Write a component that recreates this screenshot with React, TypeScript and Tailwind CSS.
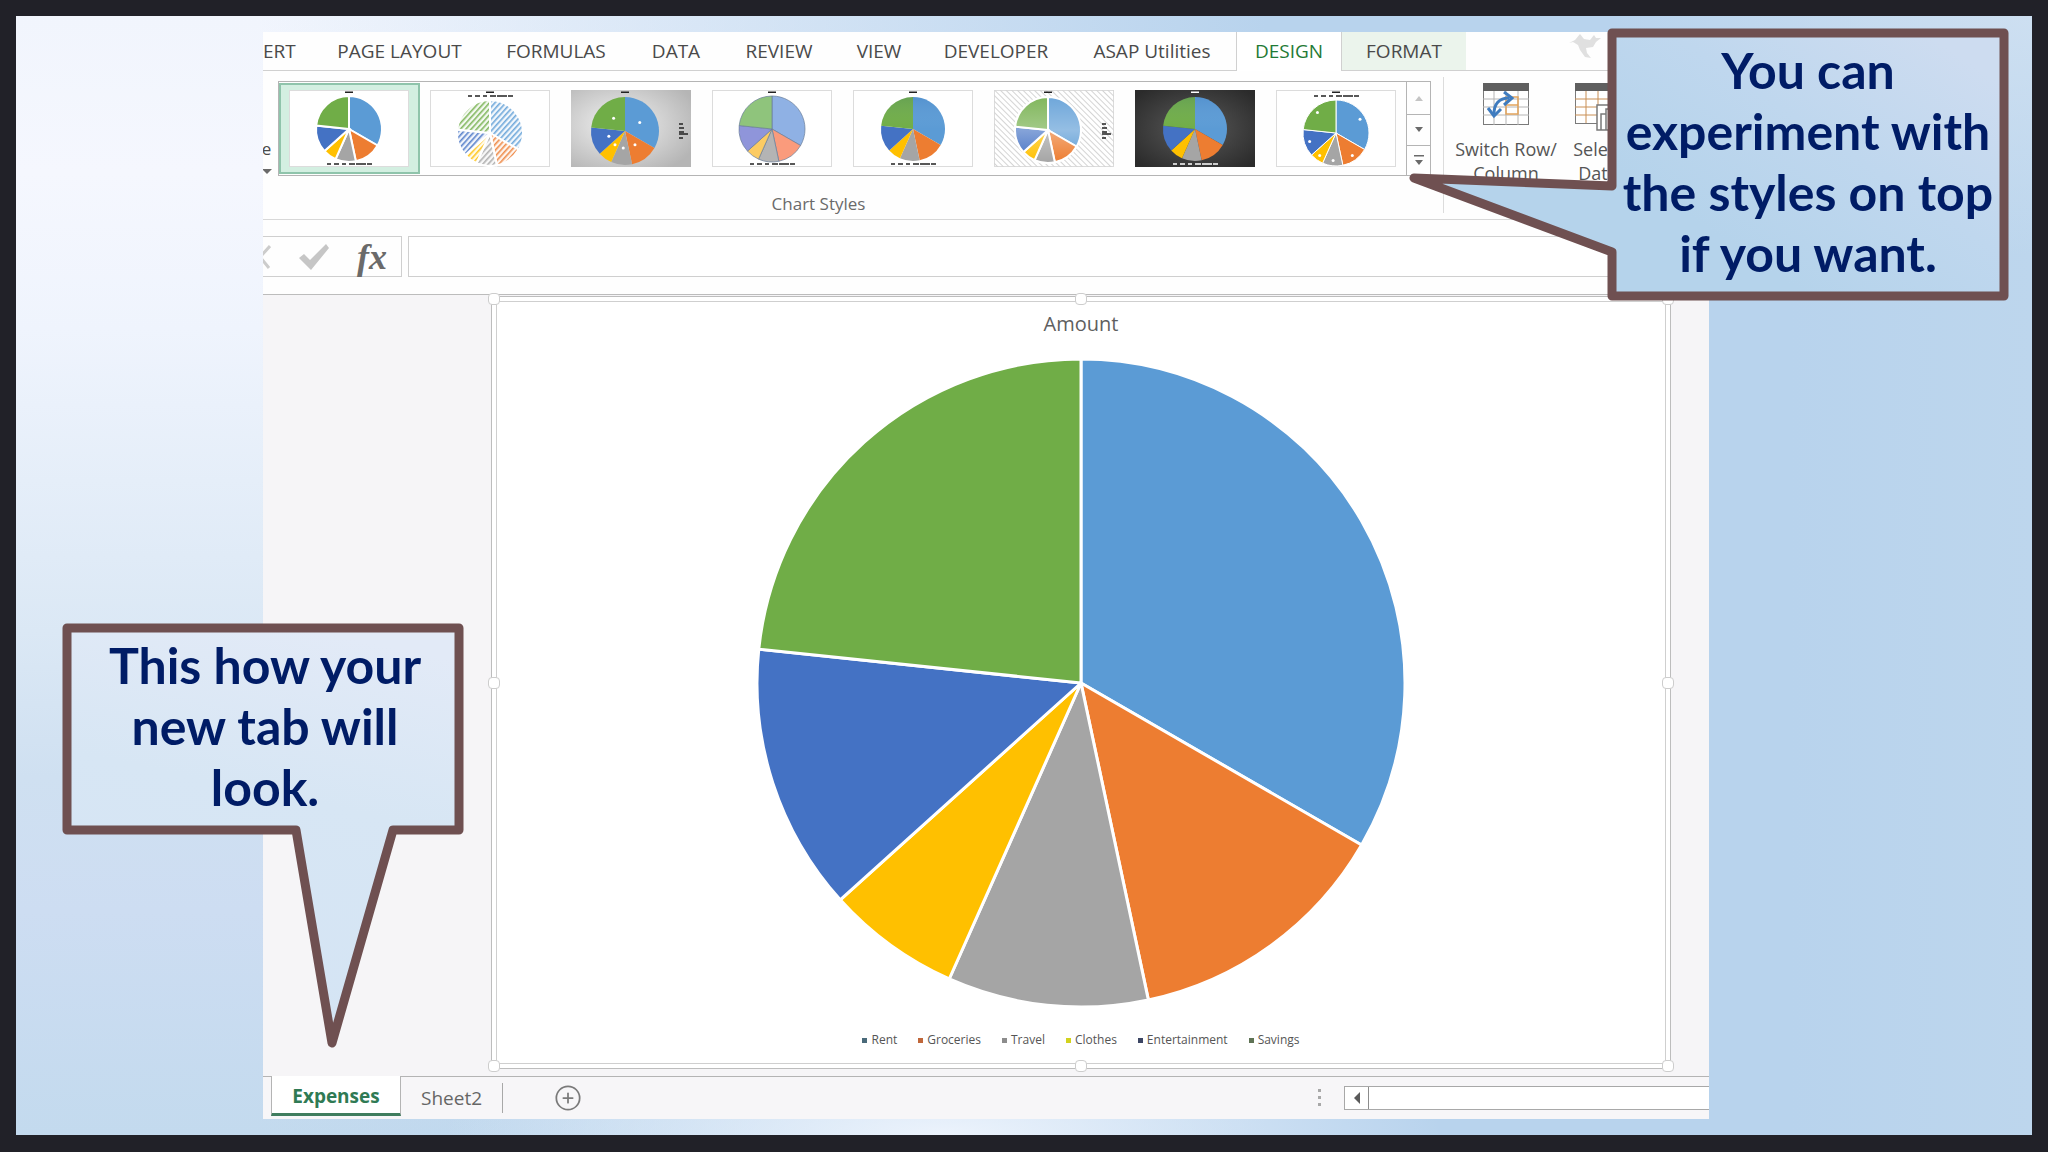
import { CirclePlus } from "lucide-react";

const FONT = "font-['Open_Sans','Noto_Sans',sans-serif]";

const expenses = [
  { name: "Rent", share: 10, color: "#5b9bd5", soft: "#8fb1e4", marker: "bg-[#4a6a7a]" },
  { name: "Groceries", share: 4, color: "#ed7d31", soft: "#fa9b7c", marker: "bg-[#c0673a]" },
  { name: "Travel", share: 3, color: "#a5a5a5", soft: "#b4b4b4", marker: "bg-[#8c8c8c]" },
  { name: "Clothes", share: 2, color: "#ffc000", soft: "#fccb62", marker: "bg-[#d2d21e]" },
  { name: "Entertainment", share: 4, color: "#4472c4", soft: "#8f95da", marker: "bg-[#3c4664]" },
  { name: "Savings", share: 7, color: "#70ad47", soft: "#8fc47c", marker: "bg-[#5f7355]" },
];

const total = expenses.reduce((sum, item) => sum + item.share, 0);

// Start and end angle of each slice, clockwise from twelve o'clock
const slices = expenses.map((item, i) => {
  const before = expenses.slice(0, i).reduce((sum, e) => sum + e.share, 0);
  const start = (before / total) * Math.PI * 2;
  const end = ((before + item.share) / total) * Math.PI * 2;
  return { ...item, start, end, mid: (start + end) / 2 };
});

function slicePath(cx: number, cy: number, r: number, start: number, end: number) {
  const x1 = cx + r * Math.sin(start);
  const y1 = cy - r * Math.cos(start);
  const x2 = cx + r * Math.sin(end);
  const y2 = cy - r * Math.cos(end);
  const large = end - start > Math.PI ? 1 : 0;
  return `M${cx} ${cy}L${x1} ${y1}A${r} ${r} 0 ${large} 1 ${x2} ${y2}Z`;
}

type ThumbStyle = {
  id: string;
  cx: number;
  cy: number;
  r: number;
  back?: "gray" | "hatch" | "dark";
  fill?: "solid" | "hatch" | "soft";
  gap?: number;
  legend: "bottom" | "top" | "right";
  dots?: number;
  shade?: boolean;
};

const chartStyles: ThumbStyle[] = [
  { id: "style1", cx: 60, cy: 39, r: 33, gap: 2, legend: "bottom" },
  { id: "style2", cx: 60, cy: 43, r: 33, fill: "hatch", gap: 2, legend: "top" },
  { id: "style3", cx: 54, cy: 41, r: 34, back: "gray", legend: "right", dots: 0.5 },
  { id: "style4", cx: 60, cy: 39, r: 33, fill: "soft", legend: "bottom" },
  { id: "style5", cx: 60, cy: 39, r: 32, legend: "bottom", shade: true },
  { id: "style6", cx: 54, cy: 40, r: 33, back: "hatch", gap: 2, legend: "right", shade: true },
  { id: "style7", cx: 60, cy: 39, r: 32, back: "dark", legend: "bottom", shade: true },
  { id: "style8", cx: 60, cy: 43, r: 33, gap: 1, legend: "top", dots: 0.84 },
];

function ChartThumb({ id, cx, cy, r, back, fill = "solid", gap = 0, legend, dots, shade }: ThumbStyle) {
  const ink = back === "dark" ? "#ffffff" : "#222222";
  const legendY = legend === "top" ? 6 : 74;
  return (
    <svg viewBox="0 0 120 77" className="h-[77px] w-[120px]" aria-hidden="true">
      <defs>
        <radialGradient id={`${id}-gray`} cx="0.4" cy="0.45" r="0.7">
          <stop offset="0" stopColor="#f2f2f2" />
          <stop offset="1" stopColor="#b5b5b5" />
        </radialGradient>
        <radialGradient id={`${id}-dark`} cx="0.5" cy="0.5" r="0.65">
          <stop offset="0" stopColor="#5a5a5a" />
          <stop offset="1" stopColor="#2b2b2b" />
        </radialGradient>
        <linearGradient id={`${id}-shade`} x1="0" y1="0" x2="0" y2="1">
          <stop offset="0" stopColor={back === "hatch" ? "#ffffff" : "#1f4fa0"} stopOpacity="0.12" />
          <stop offset="0.5" stopColor="#ffffff" stopOpacity={back === "hatch" ? 0.35 : 0} />
          <stop offset="1" stopColor="#ffffff" stopOpacity="0" />
        </linearGradient>
        <pattern id={`${id}-hatch`} width="4" height="4" patternUnits="userSpaceOnUse" patternTransform="rotate(-45)">
          <rect width="4" height="1" fill="#d4d4d4" />
        </pattern>
        {slices.map((s) => (
          <pattern key={s.name} id={`${id}-${s.name}`} width="4" height="4" patternUnits="userSpaceOnUse" patternTransform="rotate(-48)">
            <rect width="4" height="4" fill={s.color} fillOpacity="0.08" />
            <rect width="4" height="1.6" fill={s.color} fillOpacity="0.85" />
          </pattern>
        ))}
      </defs>
      <rect x="0.5" y="0.5" width="119" height="76" fill="#ffffff" stroke="#dcdcdc" />
      {back === "gray" && <rect width="120" height="77" fill={`url(#${id}-gray)`} />}
      {back === "dark" && <rect width="120" height="77" fill={`url(#${id}-dark)`} />}
      {back === "hatch" && <rect width="120" height="77" fill={`url(#${id}-hatch)`} transform="translate(120 0) scale(-1 1)" />}
      {back === "hatch" && <circle cx={cx} cy={cy} r={r + 1} fill="#ffffff" />}
      {slices.map((s) => (
        <path
          key={s.name}
          d={slicePath(cx, cy, r, s.start, s.end)}
          fill={fill === "hatch" ? `url(#${id}-${s.name})` : fill === "soft" ? s.soft : s.color}
          stroke={fill === "soft" ? "#6b7f9a" : "#ffffff"}
          strokeWidth={fill === "soft" ? 1 : gap}
          strokeOpacity={fill === "soft" ? 0.7 : 1}
        />
      ))}
      {shade && <circle cx={cx} cy={cy} r={r} fill={`url(#${id}-shade)`} />}
      {dots !== undefined &&
        slices.map((s) => (
          <circle key={s.name} cx={cx + r * dots * Math.sin(s.mid)} cy={cy - r * dots * Math.cos(s.mid)} r="1.5" fill="#ffffff" />
        ))}
      <rect x={cx - 4} y="1.5" width="8" height="1.5" fill={ink} />
      {legend === "right" ? (
        <path d="M108 34h4M108 38h5M108 42h5M108 44h9M108 48h4" stroke={ink} strokeWidth="1.6" />
      ) : (
        <path d={`M${cx - 22} ${legendY}h4m3 0h5m3 0h4m3 0h6m1 0h10m1 0h5`} stroke={ink} strokeWidth="1.6" />
      )}
    </svg>
  );
}

const ribbonTabs = [
  { label: "PAGE LAYOUT", style: "w-[169px] text-[#4a4a4a]" },
  { label: "FORMULAS", style: "w-36 text-[#4a4a4a]" },
  { label: "DATA", style: "w-24 text-[#4a4a4a]" },
  { label: "REVIEW", style: "w-[110px] text-[#4a4a4a]" },
  { label: "VIEW", style: "w-[90px] text-[#4a4a4a]" },
  { label: "DEVELOPER", style: "w-36 text-[#4a4a4a]" },
  { label: "ASAP Utilities", style: "w-[168px] text-[#4a4a4a]" },
  { label: "DESIGN", style: "w-[106px] h-[39px] border-x border-[#d0d0d0] bg-white text-[#1f7a35]" },
  { label: "FORMAT", style: "w-[124px] bg-[#ebf4ec] text-[#4a4a4a]" },
];

function RibbonTabs() {
  return (
    <nav className="flex h-[39px] shrink-0 border-b border-[#d0d0d0] text-[19px] whitespace-nowrap">
      <button aria-label="Insert" className="w-[52px] shrink-0 pr-5 text-right text-[#4a4a4a]">ERT</button>
      {ribbonTabs.map((tab) => (
        <button key={tab.label} className={`shrink-0 text-center ${tab.style}`}>
          {tab.label}
        </button>
      ))}
      {/* Feedback bird */}
      <svg viewBox="0 0 32 24" className="mt-0.5 ml-[103px] h-6 w-8 shrink-0" aria-hidden="true">
        <path d="M0 9l6-3 5-6 4 5 6 1 4-5 2 3h5l-5 4-3 5-7 1 1 5 4 5-6-1-5-7-2-5-5-3z" fill="#e0e0e0" />
      </svg>
    </nav>
  );
}

function SwitchIcon() {
  return (
    <svg viewBox="0 0 46 42" className="h-[42px] w-[46px]" aria-hidden="true">
      <rect x="0.5" y="0.5" width="45" height="41" fill="#fff" stroke="#7a7a7a" />
      <rect width="46" height="8" fill="#5f5f5f" />
      <path d="M0 16h46M0 24h46M0 32h46M11 8v34M23 8v34M35 8v34" stroke="#b5b5b5" />
      <path d="M23 14h12v17H23zM23 22h12" fill="none" stroke="#e2a45c" strokeWidth="1.5" />
      <path d="M11 31C11 21 16 15 26 15" fill="none" stroke="#3f7cbf" strokeWidth="3" />
      <path d="M21 9l8 6-8 7M5 25l6 8 7-7" fill="none" stroke="#3f7cbf" strokeWidth="3" />
    </svg>
  );
}

function SelectDataIcon() {
  return (
    <svg viewBox="0 0 46 48" className="h-12 w-[46px]" aria-hidden="true">
      <rect x="0.5" y="0.5" width="45" height="40" fill="#fff" stroke="#7a7a7a" />
      <rect width="46" height="8" fill="#5f5f5f" />
      <path d="M0 16h46M0 24h46M0 32h46M11 8v32M23 8v32" stroke="#c98f55" />
      <path d="M22 47V22h24v25zM26 47V31h5v16M31 47V26h5v21" fill="#fff" stroke="#7a7a7a" strokeWidth="1.5" />
    </svg>
  );
}

function Ribbon() {
  return (
    <div className="flex h-[149px] shrink-0 border-b border-[#d8d8d8]">
      <div className="flex w-[15px] shrink-0 flex-col items-center pt-[66px] text-[17px] leading-6 text-[#4a4a4a]">
        <span className="-ml-2">e</span>
        <svg viewBox="0 0 10 5" className="mt-2 -ml-2 h-[5px] w-2.5" aria-hidden="true">
          <path d="M0 0h10L5 5z" fill="#6a6a6a" />
        </svg>
      </div>
      <div className="w-[1153px] shrink-0 pt-2.5">
        <div className="flex h-[95px] border border-[#b4b4b4]">
          <div className="grid flex-1 grid-cols-8">
            {chartStyles.map((style, i) => (
              <button
                key={style.id}
                aria-label={`Chart style ${i + 1}`}
                className={`my-px flex items-center justify-center ${i === 0 ? "border-2 border-[#8fc4ab] bg-[#d3efe1]" : ""}`}
              >
                <ChartThumb {...style} />
              </button>
            ))}
          </div>
          <div className="flex w-6 shrink-0 flex-col divide-y divide-[#b4b4b4] border-l border-[#b4b4b4]">
            <button aria-label="Previous styles" className="flex h-[33px] items-center justify-center">
              <svg viewBox="0 0 8 5" className="w-2"><path d="M0 5h8L4 0z" fill="#c4c4c4" /></svg>
            </button>
            <button aria-label="Next styles" className="flex flex-1 items-center justify-center">
              <svg viewBox="0 0 8 5" className="w-2"><path d="M0 0h8L4 5z" fill="#6a6a6a" /></svg>
            </button>
            <button aria-label="All styles" className="flex flex-1 items-center justify-center">
              <svg viewBox="0 0 10 10" className="w-2.5"><path d="M0 0h10v1.5H0zM1 5h8l-4 5z" fill="#6a6a6a" /></svg>
            </button>
          </div>
        </div>
        <p className="mt-4 pr-[72px] text-center text-[17px] leading-6 text-[#6a6a6a]">Chart Styles</p>
      </div>
      <div className="my-1.5 ml-3 w-px shrink-0 bg-[#dcdcdc]" />
      <div className="flex gap-2 pt-3 pl-1.5 text-lg text-[#555]">
        <button className="flex w-28 shrink-0 flex-col items-center self-start">
          <SwitchIcon />
          <span className="mt-3 leading-6 whitespace-nowrap">Switch Row/<br />Column</span>
        </button>
        <button className="flex w-14 shrink-0 flex-col items-center self-start">
          <SelectDataIcon />
          <span className="mt-1.5 leading-6">Select<br />Data</span>
        </button>
      </div>
    </div>
  );
}

function FormulaBar() {
  return (
    <div className="flex h-[75px] shrink-0 gap-1.5 border-b border-[#bcbcbc] pt-4">
      <div className="flex h-[41px] w-[139px] shrink-0 items-center border border-l-0 border-[#cfcfcf]">
        <button aria-label="Cancel">
          <svg viewBox="0 0 8 24" className="h-6 w-2"><path d="M7 1L-3 12 6 23" fill="none" stroke="#cccccc" strokeWidth="3" /></svg>
        </button>
        <button aria-label="Enter" className="ml-7">
          <svg viewBox="0 0 30 26" className="h-[26px] w-[30px]"><path d="M0 14l5-4 6 6L27 0l3 4-18 22z" fill="#c6c6c6" /></svg>
        </button>
        <button aria-label="Insert function" className="ml-7 font-['Liberation_Serif',serif] text-4xl leading-9 font-bold text-[#6a6a6a] italic">
          fx
        </button>
      </div>
      <input aria-label="Formula" className="h-[41px] min-w-0 flex-1 border border-r-0 border-[#cfcfcf] bg-white px-2 outline-none" />
    </div>
  );
}

// Selection grips around the chart frame
const grips = [
  "-top-1 -left-1",
  "-top-1 left-1/2 -translate-x-1/2",
  "-top-1 -right-1",
  "top-1/2 -left-1 -translate-y-1/2",
  "top-1/2 -right-1 -translate-y-1/2",
  "-bottom-1 -left-1",
  "-bottom-1 left-1/2 -translate-x-1/2",
  "-bottom-1 -right-1",
];

function ExpenseChart() {
  return (
    <section className="relative mt-px mr-[38px] mb-[7px] ml-[228px] flex-1 border border-[#bdbdbd] bg-white p-1">
      <div className="flex h-full flex-col items-center border border-[#cfcfcf] pt-2">
        <h1 className="text-xl leading-7 text-[#5f5f5f]">Amount</h1>
        <svg viewBox="0 0 650 650" className="mt-5 w-[650px] shrink-0" role="img" aria-label="Pie chart of amounts">
          {slices.map((s) => (
            <path key={s.name} d={slicePath(325, 325, 324, s.start, s.end)} fill={s.color} stroke="#ffffff" strokeWidth="3" strokeLinejoin="round" />
          ))}
        </svg>
        <ul className="mt-6 flex gap-[21px] text-xs leading-4 text-[#555]">
          {expenses.map((item) => (
            <li key={item.name} className="flex items-center gap-1">
              <span className={`size-[5px] ${item.marker}`} />
              {item.name}
            </li>
          ))}
        </ul>
      </div>
      {grips.map((place) => (
        <span key={place} className={`absolute size-3 rounded-sm border border-[#cdcdcd] bg-white ${place}`} />
      ))}
    </section>
  );
}

function SheetTabs() {
  return (
    <footer className="flex h-[43px] shrink-0 border-t border-[#b4b4b4] bg-[#f7f6f8] text-[19px]">
      <button className="-mt-px ml-2 h-10 w-[130px] border-x border-b-3 border-x-[#b4b4b4] border-b-[#3f7d5e] bg-white pt-1 font-bold text-[#2f7a54]">
        Expenses
      </button>
      <button className="my-1.5 w-[102px] border-r border-[#a8a8a8] text-[#666]">Sheet2</button>
      <button aria-label="New sheet" className="ml-[51px]">
        <CirclePlus className="size-7 text-[#7a7a7a]" strokeWidth={1.5} />
      </button>
      <div className="ml-auto flex w-[391px] items-center">
        <svg viewBox="0 0 4 18" className="h-[18px] w-1" aria-hidden="true">
          <path d="M0 0h3v3H0zM0 7h3v3H0zM0 14h3v3H0z" fill="#a8a8a8" />
        </svg>
        <div className="ml-[22px] flex h-6 flex-1 border border-r-0 border-[#a8a8a8] bg-white">
          <button aria-label="Scroll left" className="flex w-6 items-center justify-center border-r border-[#8c8c8c]">
            <svg viewBox="0 0 6 12" className="h-3 w-1.5"><path d="M6 0v12L0 6z" fill="#5a5a5a" /></svg>
          </button>
        </div>
      </div>
    </footer>
  );
}

const CALLOUT_TEXT = "relative text-center font-['Lato',sans-serif] text-[50px] leading-[61px] font-bold text-[#001c66]";

export default function App() {
  return (
    <div className={`flex min-h-screen flex-col bg-[#212128] px-4 pt-4 pb-[17px] ${FONT}`}>
      <main className="relative flex flex-1 flex-col overflow-hidden bg-[radial-gradient(ellipse_500px_120px_at_46%_100%,#ecf3fc,transparent),radial-gradient(ellipse_420px_240px_at_100%_0%,#cddff1,transparent),linear-gradient(to_right,transparent_12%,#b8d3ed_62%,#b8d3ed_88%,#bdd6ed),linear-gradient(to_bottom,#f1f5fd,#f5f7fe_14%,#eff4fd_28%,#dbe8f5_55%,#cfe0f1_68%,#cdddf2_80%,#c3daee)] pt-4 pr-[323px] pb-4 pl-[247px]">
        <div className="flex flex-1 flex-col overflow-hidden bg-[#fefefe]">
          <RibbonTabs />
          <Ribbon />
          <FormulaBar />
          <div className="flex flex-1 bg-[#f6f5f7]">
            <ExpenseChart />
          </div>
          <SheetTabs />
        </div>

        {/* Callout pointing at the sheet tab */}
        <aside className="absolute top-[607px] left-[46px] h-[212px] w-[402px] pt-3 pr-8 pl-9">
          <svg viewBox="0 0 402 212" className="absolute inset-0 h-[212px] w-[402px] overflow-visible" aria-hidden="true">
            <defs>
              <linearGradient id="tab-note" x1="0.6" y1="0" x2="0.4" y2="1">
                <stop offset="0" stopColor="#e2eaf7" />
                <stop offset="0.4" stopColor="#d7e6f4" />
                <stop offset="1" stopColor="#d4e4f4" />
              </linearGradient>
            </defs>
            <path d="M5 5H397V207H331L270 420 234 207H5Z" fill="url(#tab-note)" stroke="#6f5051" strokeWidth="9" strokeLinejoin="round" />
          </svg>
          <p className={CALLOUT_TEXT}>This how your new tab will look.</p>
        </aside>

        {/* Callout pointing at the style gallery */}
        <aside className="absolute top-3 right-[23px] h-[273px] w-[402px] px-2 pt-3">
          <svg viewBox="0 0 402 273" className="absolute inset-0 h-[273px] w-[402px] overflow-visible" aria-hidden="true">
            <defs>
              <linearGradient id="style-note" x1="0.4" y1="0.6" x2="1" y2="0.2">
                <stop offset="0" stopColor="#b5d3eb" />
                <stop offset="0.5" stopColor="#bfd7ee" />
                <stop offset="1" stopColor="#cddcf0" />
              </linearGradient>
            </defs>
            <path d="M5 5H397V268H5V224L-193 150 5 158Z" fill="url(#style-note)" stroke="#6f5051" strokeWidth="9" strokeLinejoin="round" />
          </svg>
          <p className={CALLOUT_TEXT}>You can experiment with the styles on top if you want.</p>
        </aside>
      </main>
    </div>
  );
}
